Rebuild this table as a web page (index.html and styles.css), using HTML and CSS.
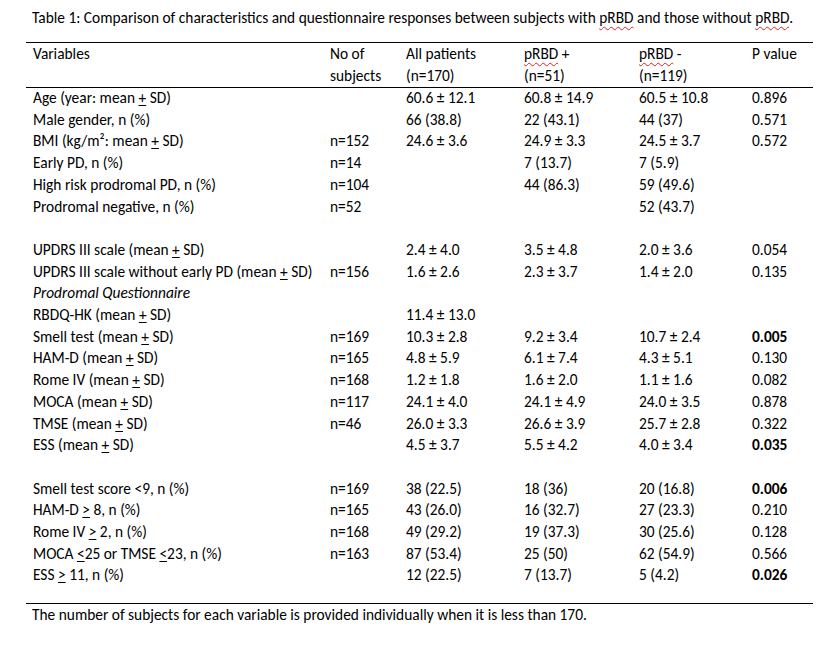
FILE: index.html
```html
<!DOCTYPE html>
<html>
<head>
<meta charset="utf-8">
<link rel="stylesheet" href="styles.css">
</head>
<body>
<div class="page">
  <p class="caption">Table 1: Comparison of characteristics and questionnaire responses between subjects with <span class="sp">pRBD</span> and those without <span class="sp">pRBD</span>.</p>
  <table class="tbl">
    <colgroup>
      <col class="c1"><col class="c2"><col class="c3"><col class="c4"><col class="c5"><col class="c6">
    </colgroup>
    <thead>
      <tr><th>Variables</th><th>No of<br>subjects</th><th>All patients<br>(n=170)</th><th><span class="sp">pRBD</span> +<br>(n=51)</th><th><span class="sp">pRBD</span> -<br>(n=119)</th><th>P value</th></tr>
    </thead>
    <tbody>
      <tr><td>Age (year: mean <u>+</u> SD)</td><td></td><td>60.6 ± 12.1</td><td>60.8 ± 14.9</td><td>60.5 ± 10.8</td><td>0.896</td></tr>
      <tr><td>Male gender, n (%)</td><td></td><td>66 (38.8)</td><td>22 (43.1)</td><td>44 (37)</td><td>0.571</td></tr>
      <tr><td>BMI (kg/m²: mean <u>+</u> SD)</td><td>n=152</td><td>24.6 ± 3.6</td><td>24.9 ± 3.3</td><td>24.5 ± 3.7</td><td>0.572</td></tr>
      <tr><td>Early PD, n (%)</td><td>n=14</td><td></td><td>7 (13.7)</td><td>7 (5.9)</td><td></td></tr>
      <tr><td>High risk prodromal PD, n (%)</td><td>n=104</td><td></td><td>44 (86.3)</td><td>59 (49.6)</td><td></td></tr>
      <tr><td>Prodromal negative, n (%)</td><td>n=52</td><td></td><td></td><td>52 (43.7)</td><td></td></tr>
      <tr><td>&nbsp;</td><td></td><td></td><td></td><td></td><td></td></tr>
      <tr><td>UPDRS III scale (mean <u>+</u> SD)</td><td></td><td>2.4 ± 4.0</td><td>3.5 ± 4.8</td><td>2.0 ± 3.6</td><td>0.054</td></tr>
      <tr><td>UPDRS III scale without early PD (mean <u>+</u> SD)</td><td>n=156</td><td>1.6 ± 2.6</td><td>2.3 ± 3.7</td><td>1.4 ± 2.0</td><td>0.135</td></tr>
      <tr><td><em>Prodromal Questionnaire</em></td><td></td><td></td><td></td><td></td><td></td></tr>
      <tr><td>RBDQ-HK (mean <u>+</u> SD)</td><td></td><td>11.4 ± 13.0</td><td></td><td></td><td></td></tr>
      <tr><td>Smell test (mean <u>+</u> SD)</td><td>n=169</td><td>10.3 ± 2.8</td><td>9.2 ± 3.4</td><td>10.7 ± 2.4</td><td><b>0.005</b></td></tr>
      <tr><td>HAM-D (mean <u>+</u> SD)</td><td>n=165</td><td>4.8 ± 5.9</td><td>6.1 ± 7.4</td><td>4.3 ± 5.1</td><td>0.130</td></tr>
      <tr><td>Rome IV (mean <u>+</u> SD)</td><td>n=168</td><td>1.2 ± 1.8</td><td>1.6 ± 2.0</td><td>1.1 ± 1.6</td><td>0.082</td></tr>
      <tr><td>MOCA (mean <u>+</u> SD)</td><td>n=117</td><td>24.1 ± 4.0</td><td>24.1 ± 4.9</td><td>24.0 ± 3.5</td><td>0.878</td></tr>
      <tr><td>TMSE (mean <u>+</u> SD)</td><td>n=46</td><td>26.0 ± 3.3</td><td>26.6 ± 3.9</td><td>25.7 ± 2.8</td><td>0.322</td></tr>
      <tr><td>ESS (mean <u>+</u> SD)</td><td></td><td>4.5 ± 3.7</td><td>5.5 ± 4.2</td><td>4.0 ± 3.4</td><td><b>0.035</b></td></tr>
      <tr><td>&nbsp;</td><td></td><td></td><td></td><td></td><td></td></tr>
      <tr><td>Smell test score &lt;9, n (%)</td><td>n=169</td><td>38 (22.5)</td><td>18 (36)</td><td>20 (16.8)</td><td><b>0.006</b></td></tr>
      <tr><td>HAM-D <u>&gt;</u> 8, n (%)</td><td>n=165</td><td>43 (26.0)</td><td>16 (32.7)</td><td>27 (23.3)</td><td>0.210</td></tr>
      <tr><td>Rome IV <u>&gt;</u> 2, n (%)</td><td>n=168</td><td>49 (29.2)</td><td>19 (37.3)</td><td>30 (25.6)</td><td>0.128</td></tr>
      <tr><td>MOCA <u>&lt;</u>25 or TMSE <u>&lt;</u>23, n (%)</td><td>n=163</td><td>87 (53.4)</td><td>25 (50)</td><td>62 (54.9)</td><td>0.566</td></tr>
      <tr><td>ESS <u>&gt;</u> 11, n (%)</td><td></td><td>12 (22.5)</td><td>7 (13.7)</td><td>5 (4.2)</td><td><b>0.026</b></td></tr>
      <tr class="spacer"><td></td><td></td><td></td><td></td><td></td><td></td></tr>
    </tbody>
  </table>
  <p class="note">The number of subjects for each variable is provided individually when it is less than 170.</p>
</div>
</body>
</html>
```
FILE: styles.css
```css
html, body {
  margin: 0;
  padding: 0;
  background: #ffffff;
}
body {
  font-family: "Calibri", "Carlito", "Lato", "Liberation Sans", sans-serif;
  font-size: 15.4px;
  color: #000000;
}
.page {
  width: 816px;
  height: 651px;
  padding-left: 26px;
  box-sizing: border-box;
}
.caption {
  margin: 0;
  padding: 8px 0 0 6px;
  height: 42px;
  line-height: 20px;
  box-sizing: border-box;
  white-space: nowrap;
}
.sp {
  text-decoration: underline wavy #e02020;
  text-decoration-thickness: 1px;
  text-underline-offset: 3px;
}
.tbl {
  border-collapse: collapse;
  table-layout: fixed;
  width: 787px;
  border-top: 1px solid #000;
  border-bottom: 1px solid #000;
}
.c1 { width: 297px; }
.c2 { width: 76px; }
.c3 { width: 118px; }
.c4 { width: 115px; }
.c5 { width: 113px; }
.c6 { width: 68px; }
.tbl th, .tbl td {
  padding: 0 0 0 7px;
  text-align: left;
  vertical-align: top;
  font-weight: normal;
  white-space: nowrap;
}
.tbl thead th {
  line-height: 22px;
  padding-top: 0;
  height: 44px;
  border-bottom: 1px solid #000;
}
.tbl tbody td {
  height: 19.7px;
  line-height: 19.7px;
  padding-bottom: 2px;
}
.tbl tbody tr.spacer td {
  height: 16px;
  line-height: 16px;
  padding-bottom: 0;
}
.tbl b {
  font-weight: bold;
}
.tbl u {
  text-decoration-thickness: 1px;
  text-underline-offset: 2px;
}
.note {
  margin: 0;
  padding: 1px 0 0 6px;
  line-height: 20px;
}
```
